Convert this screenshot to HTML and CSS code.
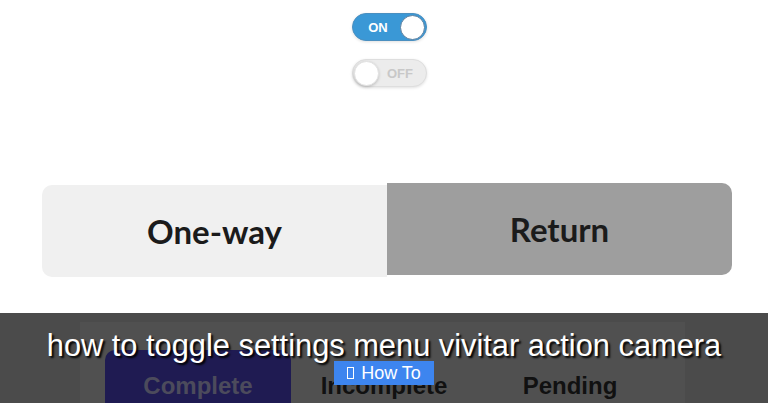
FILE: index.html
```html
<!DOCTYPE html>
<html lang="en">
<head>
  <meta charset="UTF-8" />
  <meta name="viewport" content="width=device-width, initial-scale=1.0"/>
  <title>Toggle Settings</title>
  <link rel="stylesheet" href="styles.css">
</head>
<body>
  <div class="toggles">
    <div class="switch on">
      <span class="switch-label">ON</span>
      <span class="knob"></span>
    </div>
    <div class="switch off">
      <span class="knob"></span>
      <span class="switch-label">OFF</span>
    </div>
  </div>

  <div class="trip-type">
    <div class="trip-option">One-way</div>
    <div class="trip-option selected">Return</div>
  </div>

  <div class="caption-strip">
    <div class="status-panel">
      <div class="status-tab active">Complete</div>
      <div class="status-tab">Incomplete</div>
      <div class="status-tab">Pending</div>
    </div>
    <h1 class="caption">how to toggle settings menu vivitar action camera</h1>
    <div class="badge"><span class="badge-icon"></span>How To</div>
  </div>
</body>
</html>
```

FILE: styles.css
```css
body {
  margin: 0;
  width: 768px;
  height: 403px;
  overflow: hidden;
  background-color: white;
  font-family: "Liberation Sans", Arial, sans-serif;
}

/* on / off switches */
.toggles {
  display: flex;
  flex-direction: column;
  align-items: center;
  gap: 18px;
  padding: 13px 0 0 11px;
}

.switch {
  box-sizing: border-box;
  width: 75px;
  height: 28px;
  border-radius: 14px;
  display: flex;
  align-items: center;
  padding: 0 1px;
  box-shadow: 0 1px 3px rgba(0,0,0,0.12);
}

.switch-label {
  flex: 1;
  text-align: center;
  font-weight: 700;
  font-size: 13px;
}

.knob {
  width: 25px;
  height: 25px;
  border-radius: 50%;
  background-color: white;
  box-sizing: border-box;
}

.switch.on {
  background-color: #3a98d6;
  border: 1px solid #4a8fc0;
}

.switch.on .switch-label {
  color: white;
  padding-left: 2px;
}

.switch.on .knob {
  border: 1.5px solid #5a7fa0;
}

.switch.off {
  background-color: #ececec;
  border: 1px solid #dedede;
}

.switch.off .switch-label {
  color: #c8c8c8;
  padding-right: 4px;
}

.switch.off .knob {
  border: 1px solid #e2e2e2;
  box-shadow: 0 1px 3px rgba(0,0,0,0.2);
}

/* one-way / return segmented control */
.trip-type {
  display: flex;
  align-items: flex-start;
  margin: 96px 36px 0 42px;
}

.trip-option {
  flex: 1;
  height: 92px;
  display: flex;
  align-items: center;
  justify-content: center;
  font-family: "Lato", sans-serif;
  font-weight: 700;
  font-size: 33px;
  color: #1b1b1b;
  background-color: #f0f0f0;
  border-radius: 10px 0 0 10px;
  margin-top: 2px;
}

.trip-option.selected {
  background-color: #9e9e9e;
  border-radius: 0 10px 10px 0;
  margin-top: 0;
}

/* dark caption strip at the bottom */
.caption-strip {
  position: relative;
  margin-top: 36px;
  height: 90px;
  background-color: #4b4b4b;
  overflow: hidden;
}

.status-panel {
  display: flex;
  margin: 9px 83px 0 80px;
  height: 90px;
  padding: 28px 0 0 25px;
  box-sizing: border-box;
  background-color: #505050;
}

.status-tab {
  width: 186px;
  height: 60px;
  box-sizing: border-box;
  padding-top: 22px;
  line-height: 28px;
  text-align: center;
  font-weight: 700;
  font-size: 24px;
  color: #111;
}

.status-tab.active {
  background-color: #1f1b52;
  border-radius: 10px 10px 0 0;
  color: #4c4b5c;
}

.caption {
  position: absolute;
  top: 15px;
  left: 0;
  right: 0;
  margin: 0;
  text-align: center;
  font-weight: 400;
  font-size: 30.8px;
  line-height: 36px;
  color: white;
  text-shadow: 2px 2px 2px #000;
}

.badge {
  position: absolute;
  top: 48px;
  left: 334px;
  width: 100px;
  height: 24px;
  display: flex;
  align-items: center;
  justify-content: center;
  gap: 7px;
  background-color: #3d85ef;
  color: white;
  font-size: 18px;
}

.badge-icon {
  width: 5px;
  height: 10px;
  border: 1px solid white;
}
```
